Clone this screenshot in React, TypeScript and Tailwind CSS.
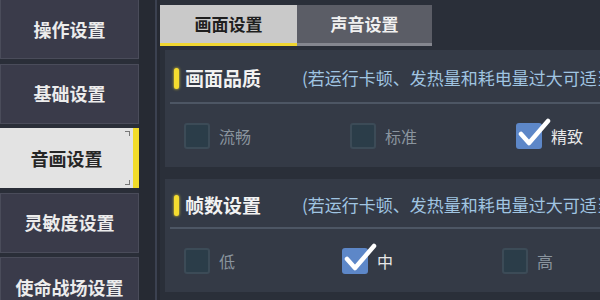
import React from "react";

const font = { fontFamily: '"Noto Sans CJK SC", "Noto Sans", sans-serif' };

function SideBtn({ label, active }: { label: string; active?: boolean }) {
  if (active) {
    return (
      <div className="relative flex h-[60px] w-[139px] shrink-0">
        <div className="relative flex flex-1 items-center justify-center bg-[#e3e3e3] text-[18px] font-bold text-[#262626]">
          {label}
          <span className="absolute right-[3px] top-[3px] h-[5px] w-[5px] border-r border-t border-[#777]" />
          <span className="absolute bottom-[3px] right-[3px] h-[5px] w-[5px] border-b border-r border-[#777]" />
        </div>
        <div className="w-[6px] bg-[#f2dc2a]" />
      </div>
    );
  }
  return (
    <div className="flex h-[60px] w-[139px] shrink-0 items-center justify-center border border-[#4a4c5a] bg-[#3a3b4a] text-[18px] font-bold text-[#ececec]">
      {label}
    </div>
  );
}

function Box({ checked }: { checked?: boolean }) {
  if (checked) {
    return (
      <div className="relative h-[26px] w-[26px] shrink-0 rounded-[3px] bg-[#5d87c8]">
        <svg className="absolute left-[2px] top-[-6px]" width="34" height="32" viewBox="0 0 34 32">
          <path d="M3 17 L11 26 L30 4" fill="none" stroke="#ffffff" strokeWidth="4.5" strokeLinecap="round" strokeLinejoin="round" />
        </svg>
      </div>
    );
  }
  return <div className="h-[26px] w-[26px] shrink-0 rounded-[3px] border-2 border-[#3c4b57] bg-[#2b3d49]" />;
}

function Option({ label, checked, w }: { label: string; checked?: boolean; w: string }) {
  return (
    <div className={`flex shrink-0 items-center gap-[9px] ${w}`}>
      <Box checked={checked} />
      <span className={`text-[16px] ${checked ? "text-[#e8e8e8]" : "text-[#8a949e]"}`}>{label}</span>
    </div>
  );
}

function Section({
  title,
  opts,
  widths,
  headH,
}: {
  title: string;
  opts: { l: string; c?: boolean }[];
  widths: string[];
  headH: string;
}) {
  return (
    <div className="flex flex-col overflow-hidden bg-[#343a46]">
      <div className={`flex items-center overflow-hidden pl-[9px] pt-[4px] ${headH}`}>
        <div className="h-[21px] w-[5px] shrink-0 rounded-full bg-[#f5dc30] shadow-[0_0_3px_#f5dc30]" />
        <span className="ml-[6px] w-[117px] shrink-0 text-[19px] font-bold text-[#f2f2f2]">{title}</span>
        <span className="whitespace-nowrap text-[17px] text-[#a0c5e2]">(若运行卡顿、发热量和耗电量过大可适当降低)</span>
      </div>
      <div className="ml-[5px] h-[2px] bg-[#4d5664]" />
      <div className="flex h-[63px] items-center pl-[19px]">
        {opts.map((o, i) => (
          <Option key={o.l} label={o.l} checked={o.c} w={widths[i]} />
        ))}
      </div>
    </div>
  );
}

export default function App() {
  return (
    <div className="flex h-[300px] w-[600px] overflow-hidden bg-[#2a2e38]" style={font}>
      <div className="mt-[-1px] flex w-[139px] shrink-0 flex-col gap-[4.5px]">
        <SideBtn label="操作设置" />
        <SideBtn label="基础设置" />
        <SideBtn label="音画设置" active />
        <SideBtn label="灵敏度设置" />
        <SideBtn label="使命战场设置" />
      </div>
      <div className="flex w-[21px] shrink-0 justify-end bg-[#262a33] pr-[3px]">
        <div className="w-[2px] bg-[#3b4150]" />
      </div>
      <div className="flex min-w-0 flex-1 flex-col bg-[#2a2f39]">
        <div className="flex h-[50px] shrink-0 pt-[5px]">
          <div className="flex h-[41px] w-[137px] items-center justify-center border-b-[3px] border-[#f0d630] bg-[#c9c9c9] text-[17px] font-bold text-[#1f1f1f]">
            画面设置
          </div>
          <div className="flex h-[41px] w-[135px] items-center justify-center border-b-[3px] border-[#85878f] bg-[#5b5d66] text-[17px] font-bold text-[#f0f0f0]">
            声音设置
          </div>
        </div>
        <div className="flex flex-col gap-[12px] pl-[5px]">
          <Section
            title="画面品质"
            headH="h-[52px]"
            opts={[{ l: "流畅" }, { l: "标准" }, { l: "精致", c: true }]}
            widths={["w-[166px]", "w-[166px]", "w-[100px]"]}
          />
          <Section
            title="帧数设置"
            headH="h-[48px]"
            opts={[{ l: "低" }, { l: "中", c: true }, { l: "高" }]}
            widths={["w-[158px]", "w-[160px]", "w-[100px]"]}
          />
        </div>
      </div>
    </div>
  );
}
